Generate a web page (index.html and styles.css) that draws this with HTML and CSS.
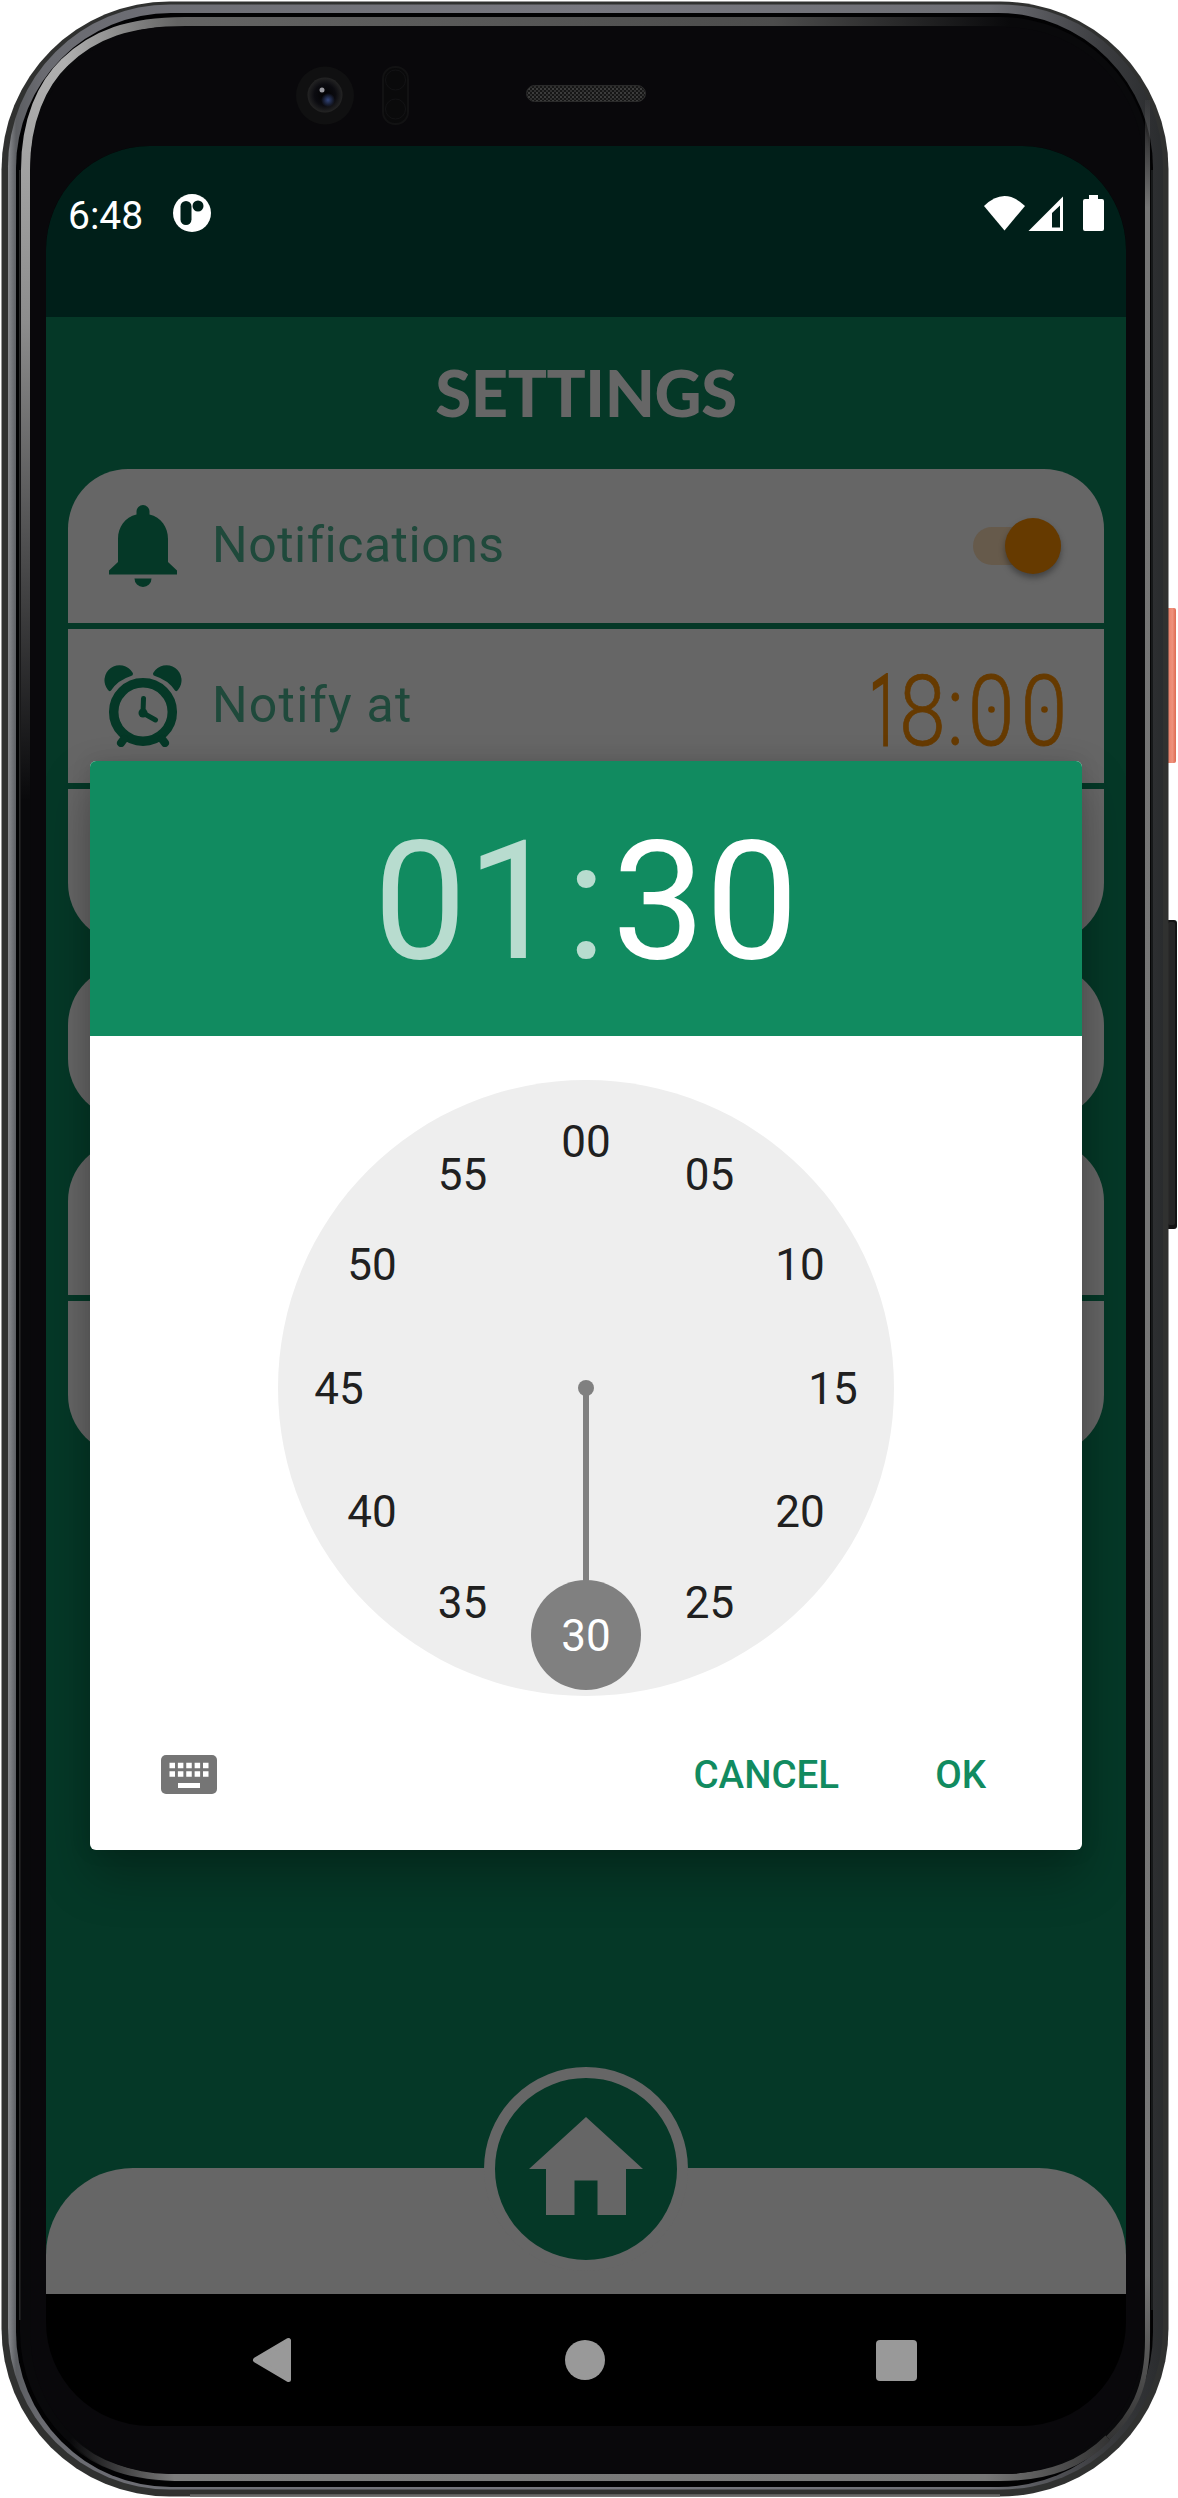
FILE: index.html
```html
<!DOCTYPE html>
<html lang="en">
<head>
<meta charset="utf-8">
<title>Settings</title>
<link rel="stylesheet" href="styles.css">
</head>
<body>
<div class="device">
  <svg class="frame" viewBox="0 0 1178 2498" aria-hidden="true">
    <defs>
      <linearGradient id="edge" x1="0" y1="0" x2="1" y2="0">
        <stop offset="0" stop-color="#8a8c90"/><stop offset=".007" stop-color="#5c5e62"/><stop offset=".03" stop-color="#6a6b71"/><stop offset=".5" stop-color="#77777f"/><stop offset=".85" stop-color="#6d6e74"/><stop offset=".95" stop-color="#3a3b3e"/><stop offset="1" stop-color="#2a2c2e"/>
      </linearGradient>
      <linearGradient id="left" gradientUnits="userSpaceOnUse" x1="0" y1="60" x2="0" y2="800">
        <stop offset="0" stop-color="#b0b0b0"/><stop offset=".35" stop-color="#8d8d8d"/><stop offset="1" stop-color="#8d8d8d" stop-opacity="0"/>
      </linearGradient>
      <linearGradient id="top" gradientUnits="userSpaceOnUse" x1="64" y1="0" x2="1010" y2="0">
        <stop offset="0" stop-color="#b0b0b0"/><stop offset=".12" stop-color="#646464"/><stop offset=".75" stop-color="#4c4c4c"/><stop offset="1" stop-color="#4c4c4c" stop-opacity="0"/>
      </linearGradient>
      <linearGradient id="right" gradientUnits="userSpaceOnUse" x1="0" y1="90" x2="0" y2="2440">
        <stop offset="0" stop-color="#777" stop-opacity="0"/><stop offset=".05" stop-color="#757575"/><stop offset=".93" stop-color="#777"/><stop offset="1" stop-color="#333"/>
      </linearGradient>
      <linearGradient id="bottom" gradientUnits="userSpaceOnUse" x1="70" y1="0" x2="1110" y2="0">
        <stop offset="0" stop-color="#777" stop-opacity="0"/><stop offset=".1" stop-color="#7c7c7c"/><stop offset=".88" stop-color="#777"/><stop offset="1" stop-color="#333"/>
      </linearGradient>
      <linearGradient id="power" x1="0" y1="0" x2="1" y2="0">
        <stop offset="0" stop-color="#c9553d"/><stop offset=".35" stop-color="#ea8069"/><stop offset=".7" stop-color="#ef917c"/><stop offset="1" stop-color="#dd6a52"/>
      </linearGradient>
      <radialGradient id="lens"><stop offset="0" stop-color="#020203"/><stop offset=".6" stop-color="#0b0b10"/><stop offset="1" stop-color="#242424"/></radialGradient>
      <radialGradient id="glint"><stop offset="0" stop-color="#33457a"/><stop offset="1" stop-color="#33457a" stop-opacity="0"/></radialGradient>
      <pattern id="mesh" width="4" height="4" patternUnits="userSpaceOnUse"><rect width="4" height="4" fill="#161616"/><rect width="2" height="2" fill="#3c3c3c"/><rect x="2" y="2" width="2" height="2" fill="#303030"/></pattern>
    </defs>
    <rect x="1164" y="608" width="12" height="155" rx="2" fill="url(#power)"/>
    <rect x="1164" y="920" width="13" height="309" rx="3" fill="#141414"/>
    <rect x="1168" y="922" width="7" height="303" rx="2" fill="#262626"/>
    <rect x="1.5" y="1.5" width="1167" height="2495" rx="168" fill="#303130"/>
    <path d="M190 2495.500H1000" fill="none" stroke="#686868" stroke-width="2.5"/>
    <rect x="8" y="4.5" width="1155" height="2485" rx="162" fill="url(#edge)"/>
    <rect x="16" y="13" width="1137" height="2474" rx="155" fill="#020203"/>
    <rect x="1151" y="170" width="2" height="2140" fill="#17191a"/>
    <rect x="20" y="17" width="1130.500" height="2464.500" rx="150" fill="#09090b"/>
    <rect x="19" y="170" width="1.500" height="2150" fill="#2a2a2a"/>
    <g fill="none">
      <path d="M25.500 800V170C25.500 120 42 84 65 62" stroke="url(#left)" stroke-width="9"/>
      <path d="M64.500 62.500C94 34 130 21.500 185 21.500H1010" stroke="url(#top)" stroke-width="9"/>
      <path d="M1147.500 100V2340C1147.500 2390 1131 2416 1108 2438" stroke="url(#right)" stroke-width="5"/>
      <path d="M70 2440C96 2465 130 2477.500 185 2477.500H1000C1050 2477.500 1083 2463 1108 2438" stroke="url(#bottom)" stroke-width="7"/>
    </g>
    <rect x="30.500" y="27" width="1113" height="2447" rx="138" fill="#09080b"/>
    <circle cx="325" cy="95.500" r="29" fill="#101011"/>
    <circle cx="325" cy="95" r="17.500" fill="url(#lens)"/>
    <circle cx="328" cy="100" r="7" fill="url(#glint)"/>
    <circle cx="322" cy="90" r="2.500" fill="#9a9aa0"/>
    <rect x="383" y="67" width="25" height="57" rx="12" fill="#0a0a0b" stroke="#121213" stroke-width="2"/>
    <circle cx="395.500" cy="80" r="10" fill="none" stroke="#131315"/>
    <circle cx="395.500" cy="109" r="10" fill="none" stroke="#131315"/>
    <rect x="526.500" y="85.500" width="119" height="16" rx="8" fill="url(#mesh)" stroke="#2a2a2a"/>
  </svg>

  <div class="screen">
    <header class="status">
      <span class="time">6:48</span>
      <svg class="app-badge" viewBox="0 0 38 38"><circle cx="19" cy="19" r="19" fill="#fff"/><rect x="7.500" y="7" width="11" height="24" rx="5.500" fill="#001f19"/><circle cx="25" cy="12" r="5.500" fill="#001f19"/></svg>
      <svg class="signals" viewBox="0 0 120 36" fill="#fff"><path d="M0 11Q20.500-9 41 11L20.500 35.500Z"/><path fill-rule="evenodd" d="M44.500 36L79 1.500V36ZM68 32.500H76V10.500L68 18Z"/><path d="M105 0h9v4h4q2 0 2 2v28q0 2-2 2h-17q-2 0-2-2V6q0-2 2-2h4Z"/></svg>
    </header>

    <main class="settings">
      <h1>SETTINGS</h1>
      <section class="card">
        <div class="row">
          <svg class="row-icon" viewBox="0 0 78 82" fill="#053827"><path d="M39 0a6.500 6.500 0 0 1 6.500 6.500V9.500C57 12 64 22 64 34V57L73 65.500V69.500H5V65.500L14 57V34C14 22 21 12 32.500 9.500V6.500A6.500 6.500 0 0 1 39 0ZM30.500 73.500H47.500A8.500 8.500 0 0 1 30.500 73.500Z"/></svg>
          <span>Notifications</span>
          <i class="switch"></i>
        </div>
        <div class="row">
          <svg class="row-icon" viewBox="0 0 78 82" fill="#053827"><path d="M4 25A15.100 15.100 0 1 1 28.500 7.500Q30 10 27 11Q14 15 7 25.500Q5.500 27 4 25ZM74 25A15.100 15.100 0 1 0 49.500 7.500Q48 10 51 11Q64 15 71 25.500Q72.500 27 74 25Z"/><circle cx="39" cy="47" r="29.300" fill="none" stroke="#053827" stroke-width="9.500"/><path d="M39.500 33.500L39 48L51.500 55" fill="none" stroke="#053827" stroke-width="5" stroke-linecap="round"/><path d="M20 74L17 78M58 74L61 78" fill="none" stroke="#053827" stroke-width="8" stroke-linecap="round"/><circle cx="39" cy="48" r="4.500"/></svg>
          <span class="wide">Notify at</span>
          <svg class="alarm-time" viewBox="0 0 196 80" aria-label="18:00"><text class="one" transform="translate(-1 79) scale(.54 1)">1</text><text transform="translate(0 79) scale(.85 1)"><tspan x="34">8</tspan><tspan x="90">:</tspan><tspan x="115">0</tspan><tspan x="177">0</tspan></text><g><circle cx="121.500" cy="43.500" r="3.300"/><circle cx="174.500" cy="43.500" r="3.300"/></g></svg>
        </div>
        <div class="row"></div>
      </section>
      <section class="card"><div class="row"></div></section>
      <section class="card"><div class="row"></div><div class="row"></div></section>
      <footer class="tabbar">
        <div class="home"><svg viewBox="0 0 114 98" fill="#666"><path d="M57 0L114 52H97V98H68.500V63.500H45.500V98H17V52H0Z"/></svg></div>
      </footer>
    </main>

    <nav class="sysnav">
      <svg viewBox="0 0 40 46" width="40" height="46"><path d="M3.500 23L36.500 3.500V42.500Z" fill="#999" stroke="#999" stroke-width="5" stroke-linejoin="round"/></svg>
      <i class="nav-home"></i>
      <i class="nav-recent"></i>
    </nav>

    <div class="dialog" role="dialog">
      <div class="dialog-head"><span class="hour">01</span><span class="colon">:</span><span class="minute">30</span></div>
      <svg class="dial" viewBox="-308 -308 616 616">
        <circle r="308" fill="#eee"/>
        <path d="M0 0V200" stroke="#808080" stroke-width="6"/>
        <circle r="8" fill="#808080"/>
        <circle cy="247" r="55" fill="#808080"/>
        <g class="ticks">
          <text x="0" y="-231.500">00</text><text x="123.500" y="-198">05</text><text x="214" y="-108">10</text>
          <text x="247" y="15.500">15</text><text x="214" y="139">20</text><text x="123.500" y="229.500">25</text>
          <text class="picked" x="0" y="262.500">30</text><text x="-123.500" y="229.500">35</text><text x="-214" y="139">40</text>
          <text x="-247" y="15.500">45</text><text x="-214" y="-108">50</text><text x="-123.500" y="-198">55</text>
        </g>
      </svg>
      <div class="actions">
        <svg class="keyboard" viewBox="0 0 56 39"><rect width="56" height="39" rx="5" fill="#757575"/><path d="M8.500 10.500H47.500M8.500 19H47.500" stroke="#fff" stroke-width="5.500" stroke-dasharray="5.500 2.875"/><path d="M17 30.500H39" stroke="#fff" stroke-width="5"/></svg>
        <span class="cancel">CANCEL</span>
        <span>OK</span>
      </div>
    </div>
  </div>
</div>
</body>
</html>
```

FILE: styles.css
```css
* { box-sizing: border-box; }
body { margin: 0; background: #fff; font-family: Roboto, "Liberation Sans", sans-serif; }
svg { display: block; flex: none; }

.device { position: relative; width: 1178px; height: 2498px; padding: 146px 52px 72px 46px; overflow: hidden; }
.frame { position: absolute; inset: 0; width: 1178px; height: 2498px; }

.screen { position: relative; width: 1080px; height: 2280px; display: flex; flex-direction: column; border-radius: 104px; overflow: hidden; background: #000; }

.status { height: 171px; display: flex; align-items: flex-start; padding: 48px 22px 0 22px; background: #001f19; color: #fff; }
.time { width: 78px; font-size: 39px; line-height: 44px; }
.app-badge { width: 38px; height: 38px; margin-left: 27px; }
.signals { width: 120px; height: 36px; margin: 1px 0 0 auto; }

.settings { flex: 1; display: flex; flex-direction: column; background: #053827; }
h1 { height: 152px; margin: 0; padding-top: 35px; text-align: center; font: 900 65px/80px Lato, sans-serif; letter-spacing: -.4px; color: #666; }
.card { margin: 0 22px 22px; display: flex; flex-direction: column; gap: 6px; border-radius: 60px; overflow: hidden; }
.row { height: 154px; display: flex; align-items: center; padding: 0 38px 2px 36px; background: #666; color: #1f493b; font-size: 50px; letter-spacing: .5px; }
.row-icon { width: 78px; height: 82px; margin: 2px 30px 0 0; }
.wide { letter-spacing: 1.2px; }
.switch { position: relative; width: 88px; height: 38px; margin: 2px 5px 0 auto; border-radius: 19px; background: #665a4b; }
.switch::after { content: ""; position: absolute; right: 0; top: -9px; width: 56px; height: 56px; border-radius: 50%; background: #663a00; box-shadow: 0 4px 6px rgba(0,0,0,.35); }
.alarm-time { width: 196px; height: 80px; margin: 2px 0 0 auto; font-size: 99px; font-weight: 300; letter-spacing: 0; fill: #663a00; overflow: visible; }
.alarm-time text { stroke: #663a00; stroke-width: .8px; }
.alarm-time .one { stroke-width: 3px; }

.tabbar { height: 126px; margin-top: auto; display: flex; justify-content: center; border-radius: 87px 87px 0 0; background: #666; }
.home { width: 204px; height: 204px; margin-top: -101px; display: flex; justify-content: center; padding-top: 39px; border: 11px solid #666; border-radius: 50%; background: #053827; }
.home svg { width: 114px; height: 98px; }

.sysnav { height: 132px; display: flex; align-items: center; justify-content: space-between; padding: 0 209px 0 206px; }
.nav-home { width: 40px; height: 40px; margin-left: 2px; border-radius: 50%; background: #999; }
.nav-recent { width: 41px; height: 41px; border-radius: 4px; background: #999; }

.dialog { position: absolute; left: 44px; top: 615px; width: 992px; height: 1089px; display: flex; flex-direction: column; align-items: center; border-radius: 6px; overflow: hidden; background: #fff; box-shadow: 0 26px 50px rgba(0,0,0,.27), 0 0 20px rgba(0,0,0,.1); }
.dialog-head { align-self: stretch; height: 275px; display: grid; grid-template-columns: 1fr 52px 1fr; align-items: center; background: #118b60; color: #fff; font-size: 166px; line-height: 275px; }
.dialog-head span { padding-top: 3px; height: 275px; }
.hour { text-align: right; opacity: .7; }
.colon { text-align: center; opacity: .7; }
.dial { width: 616px; height: 616px; margin-top: 44px; }
.ticks { font-size: 44px; text-anchor: middle; fill: #202020; }
.ticks .picked { fill: #fff; }
.actions { align-self: stretch; flex: 1; display: flex; align-items: center; padding: 2px 96px 0 71px; color: #118b60; font-size: 38.5px; font-weight: 500; }
.keyboard { width: 56px; height: 39px; }
.cancel { margin: 0 96px 0 auto; }
```
